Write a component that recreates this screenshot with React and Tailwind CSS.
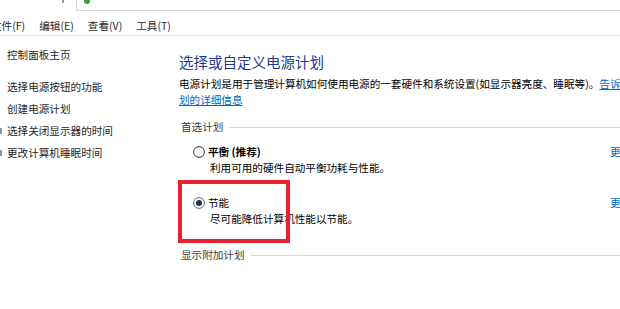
const font = { fontFamily: '"Noto Sans CJK SC", "Noto Sans", sans-serif' }

function Radio({ checked }) {
  return (
    <svg width="12" height="12" viewBox="0 0 12 12" className="shrink-0">
      <circle cx="6" cy="6" r="5.4" fill="#fff" stroke={checked ? '#5a6a7a' : '#333'} strokeWidth="1" />
      {checked && <circle cx="6" cy="6" r="3" fill="#1f3550" />}
    </svg>
  )
}

function GroupLabel({ children }) {
  return (
    <div className="flex items-center h-4 pl-[2px]">
      <span className="text-[#3c3c3c] whitespace-nowrap">{children}</span>
      <div className="flex-1 h-px bg-[#d6d6d6] ml-[6px]" />
    </div>
  )
}

function Plan({ name, bold, desc, checked, className }) {
  return (
    <div className={`flex ${className}`}>
      <div className="w-[431px] pl-[14px]">
        <div className="flex items-center h-4 gap-[3px]">
          <Radio checked={checked} />
          <span className={bold ? 'font-bold text-black' : 'text-black'}>{name}</span>
        </div>
        <div className="pl-[17px] leading-4 text-black">{desc}</div>
      </div>
      <span className="text-[#0066cc] whitespace-nowrap leading-4">更改计划设置</span>
    </div>
  )
}

export default function App() {
  const nav = ['选择电源按钮的功能', '创建电源计划', '选择关闭显示器的时间', '更改计算机睡眠时间']

  return (
    <div className="relative w-[620px] h-[309px] overflow-hidden bg-white text-[10.6px] leading-4" style={font}>
      {/* address strip */}
      <div className="flex h-[11px]">
        <div className="w-[76px] relative">
          <div className="absolute left-[62px] top-0 w-[2px] h-[3px] bg-[#9a9a9a]" />
        </div>
        <div className="flex-1 border-l border-b border-[#d4d4d4] pl-[7px]">
          <div className="w-[6px] h-[4px] bg-[#3aa03a] rounded-b-full" />
        </div>
      </div>

      {/* menu bar */}
      <div className="flex items-center h-[25px] pt-[6px] border-b border-[#ececec] text-[#2a2a2a] gap-[14px] -ml-[9px]">
        <span>文件(F)</span>
        <span>编辑(E)</span>
        <span>查看(V)</span>
        <span>工具(T)</span>
      </div>

      <div className="flex">
        {/* left nav */}
        <div className="w-[179px] shrink-0 pl-[7px] pt-[11px] text-[#1e1e1e] relative">
          <div className="leading-4">控制面板主页</div>
          <div className="mt-[16px] leading-4">{nav[0]}</div>
          {nav.slice(1).map((t, i) => (
            <div key={t} className="mt-[6px] leading-4 relative">
              {i > 0 && <span className="absolute -left-[7px] top-[5px] w-[2px] h-[6px] bg-[#8a96b4]" />}
              {t}
            </div>
          ))}
        </div>

        {/* main */}
        <div className="w-[620px] shrink-0 pt-[16px]">
          <div className="text-[14.5px] leading-5 text-[#1e3a8f]">选择或自定义电源计划</div>
          <div className="mt-[4px] leading-4 whitespace-nowrap text-black">
            电源计划是用于管理计算机如何使用电源的一套硬件和系统设置(如显示器亮度、睡眠等)。
            <span className="text-[#0066cc] underline">告诉我有关电源计</span>
          </div>
          <div className="leading-4 text-[#0066cc] underline">划的详细信息</div>

          <div className="mt-[11px] w-[441px]">
            <GroupLabel>首选计划</GroupLabel>
          </div>
          <Plan className="mt-[9px]" name="平衡 (推荐)" bold desc="利用可用的硬件自动平衡功耗与性能。" />
          <Plan className="mt-[19px]" name="节能" checked desc="尽可能降低计算机性能以节能。" />
          <div className="mt-[20px] w-[441px]">
            <GroupLabel>显示附加计划</GroupLabel>
          </div>
        </div>
      </div>

      {/* red annotation box */}
      <div className="absolute left-[178px] top-[180px] w-[112px] h-[63px] border-[4px] border-[#e5222d]" />
    </div>
  )
}
